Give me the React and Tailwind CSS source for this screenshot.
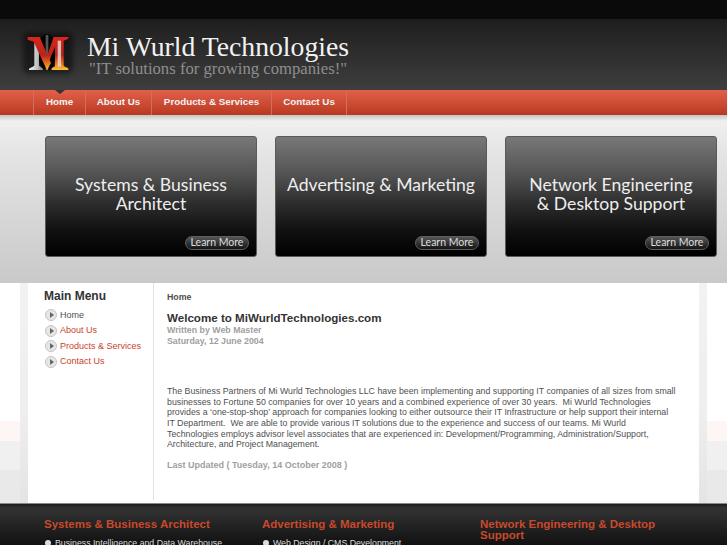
import React from "react";

const navItems = [
  { label: "Home", width: "w-[52px]", active: true },
  { label: "About Us", width: "w-[66px]" },
  { label: "Products & Services", width: "w-[120px]" },
  { label: "Contact Us", width: "w-[75px]" },
];

const cards = [
  { lines: ["Systems & Business", "Architect"] },
  { lines: ["Advertising & Marketing"] },
  { lines: ["Network Engineering", "& Desktop Support"] },
];

const menu = [
  { label: "Home", color: "text-[#505050]" },
  { label: "About Us", color: "text-[#c8442a]" },
  { label: "Products & Services", color: "text-[#c8442a]" },
  { label: "Contact Us", color: "text-[#c8442a]" },
];

const footer = [
  { title: "Systems & Business Architect", item: "Business Intelligence and Data Warehouse" },
  { title: "Advertising & Marketing", item: "Web Design / CMS Development" },
  { title: "Network Engineering & Desktop Support", item: "" },
];

function Logo() {
  return (
    <svg width="70" height="60" viewBox="0 0 210 180" className="shrink-0">
      <defs>
        <linearGradient id="fire" x1="0" y1="0" x2="0" y2="1">
          <stop offset="0" stopColor="#d8261c" />
          <stop offset="0.55" stopColor="#b8231a" />
          <stop offset="0.82" stopColor="#ee7a1c" />
          <stop offset="1" stopColor="#f8c63c" />
        </linearGradient>
        <linearGradient id="steel" x1="0" y1="0" x2="1" y2="0">
          <stop offset="0" stopColor="#f2f2f2" />
          <stop offset="0.6" stopColor="#c0c0c0" />
          <stop offset="1" stopColor="#7a7a7a" />
        </linearGradient>
        <filter id="glow" x="-20%" y="-20%" width="140%" height="140%">
          <feGaussianBlur stdDeviation="8" />
        </filter>
      </defs>
      <rect x="24" y="22" width="150" height="124" rx="16" fill="#000" opacity="0.45" filter="url(#glow)" />
      <ellipse cx="96" cy="82" rx="27" ry="55" fill="#040404" />
      <path d="M92 30h8v106h-8z" fill="#555" />
      <path d="M58 46h14v76l12 9v4H42v-4l16-9z" fill="url(#steel)" />
      <path d="M38 36h36l34 78-12 22-40-86-18-6z" fill="url(#fire)" />
      <path d="M116 36h44v5l-14 6v76l14 7v5h-50v-5l10-6V66l-18 42-6-14z" fill="url(#fire)" />
      <path d="M128 47h10v78h-10z" fill="#e0e0e0" opacity="0.8" />
    </svg>
  );
}

function Card({ lines }) {
  return (
    <div className="relative flex h-[121px] w-[212px] flex-col items-center rounded-[3px] border border-[#5a5a5a] bg-[linear-gradient(#787878_0,#555555_30%,#2e2e2e_55%,#111111_78%,#000000_100%)] pt-[38px] font-['Lato',sans-serif] text-[17.6px] leading-[19px] text-[#eeeeee]">
      {lines.map((l) => (
        <div key={l}>{l}</div>
      ))}
      <div className="absolute bottom-[6px] right-[7px] flex h-[14px] w-[64px] items-center justify-center rounded-full border border-[#5e5e5e] bg-[linear-gradient(#555555,#151515)] pb-[1px] text-[10.5px] text-[#dddddd]">
        Learn More
      </div>
    </div>
  );
}

function MenuBullet() {
  return (
    <span className="ml-[1px] flex h-[12px] w-[12px] shrink-0 items-center justify-center rounded-full border border-[#c4c4c4] bg-[#e6e6e6]">
      <span className="ml-[1px] h-0 w-0 border-y-[3px] border-l-[4px] border-y-transparent border-l-[#666666]" />
    </span>
  );
}

function SideStrip() {
  return <div className="h-full w-[8px] bg-[linear-gradient(#f4f1f1,#eeeeee_60%,#e4e4e4)]" />;
}

export default function App() {
  return (
    <div className="h-[545px] w-[727px] overflow-hidden bg-white font-['Liberation_Sans',sans-serif]">
      <header className="h-[90px] bg-[linear-gradient(#0a0a0a_0,#0a0a0a_19px,#1e1e1e_19px,#3e3e3e_100%)] pl-[15px] pt-[25px]">
        <div className="flex items-start gap-[2px]">
          <Logo />
          <div className="pt-[8px] font-['Liberation_Serif',serif]">
            <div className="text-[27.7px] leading-[28px] text-[#f2f2f2]">Mi Wurld Technologies</div>
            <div className="pl-[2px] text-[16.7px] leading-[15px] text-[#8e8e8e]">"IT solutions for growing companies!"</div>
          </div>
        </div>
      </header>

      <nav className="flex h-[25px] bg-gradient-to-b from-[#e2604a] to-[#b8391f] pl-[33px]">
        {navItems.map((n) => (
          <div
            key={n.label}
            className={`relative flex items-center justify-center border-l border-[#d0705a] text-[9.8px] font-bold text-[#f4f4f4] ${n.width}`}
          >
            {n.active && (
              <span className="absolute left-[21px] top-0 h-0 w-0 border-x-[5px] border-t-[4px] border-x-transparent border-t-[#333333]" />
            )}
            {n.label}
          </div>
        ))}
        <div className="border-l border-[#d0705a]" />
      </nav>

      <section className="flex h-[168px] gap-[18px] bg-[linear-gradient(#c4c4c4_0,#efefef_6px,#e4e4e4_40px,#c9c9c9_100%)] pl-[45px] pt-[21px]">
        {cards.map((c) => (
          <Card key={c.lines[0]} lines={c.lines} />
        ))}
      </section>

      <div className="flex h-[220px] bg-[linear-gradient(#ffffff_0,#ffffff_138px,#fdf6f5_138px,#fdf6f5_158px,#f0f0f0_158px,#f0f0f0_187px,#e9e9e9_187px)] pl-[20px]">
        <SideStrip />
        <main className="flex h-[220px] w-[671px] bg-white">
          <aside className="mb-[3px] w-[126px] border-r border-[#e2e2e2] pl-[16px] pt-[6px]">
            <div className="text-[12px] font-bold leading-[14px] text-[#333333]">Main Menu</div>
            <ul className="mt-[6px] flex flex-col gap-[3px]">
              {menu.map((m) => (
                <li key={m.label} className={`flex h-[12.5px] items-center gap-[3px] text-[9px] ${m.color}`}>
                  <MenuBullet />
                  {m.label}
                </li>
              ))}
            </ul>
          </aside>
          <article className="flex-1 pl-[13px] pr-[22px] pt-[9px] text-[8.8px] text-[#505050]">
            <div className="font-bold leading-[10px]">Home</div>
            <h1 className="mt-[9px] text-[11.6px] font-bold leading-[14px] text-[#333333]">Welcome to MiWurldTechnologies.com</h1>
            <div className="font-bold leading-[10.6px] text-[#a0a0a0]">Written by Web Master</div>
            <div className="font-bold leading-[10.6px] text-[#a0a0a0]">Saturday, 12 June 2004</div>
            <p className="mt-[40px] leading-[10.6px]">
              The Business Partners of Mi Wurld Technologies LLC have been implementing and supporting IT companies of all sizes from small businesses to Fortune 50 companies for over 10 years and a combined experience of over 30 years.&nbsp; Mi Wurld Technologies provides a ‘one-stop-shop’ approach for companies looking to either outsource their IT Infrastructure or help support their internal IT Department.&nbsp; We are able to provide various IT solutions due to the experience and success of our teams. Mi Wurld Technologies employs advisor level associates that are experienced in: Development/Programming, Administration/Support, Architecture, and Project Management.
            </p>
            <div className="mt-[9px] text-[9px] font-bold text-[#a0a0a0]">Last Updated ( Tuesday, 14 October 2008 )</div>
          </article>
        </main>
        <SideStrip />
      </div>

      <footer className="flex h-[42px] gap-[18px] border-t border-[#888888] bg-[linear-gradient(#1c1c1c_0,#333333_4px,#111111_100%)] pl-[44px] pt-[15px]">
        {footer.map((f) => (
          <div key={f.title} className="w-[200px]">
            <div className="text-[11.5px] font-bold leading-[11px] text-[#c8492c]">{f.title}</div>
            {f.item && (
              <div className="ml-[1px] mt-[8px] flex items-center gap-[4px] text-[8.75px] leading-[10px] text-[#dddddd]">
                <span className="h-[6px] w-[6px] rounded-full bg-[#dddddd]" />
                {f.item}
              </div>
            )}
          </div>
        ))}
      </footer>
    </div>
  );
}
